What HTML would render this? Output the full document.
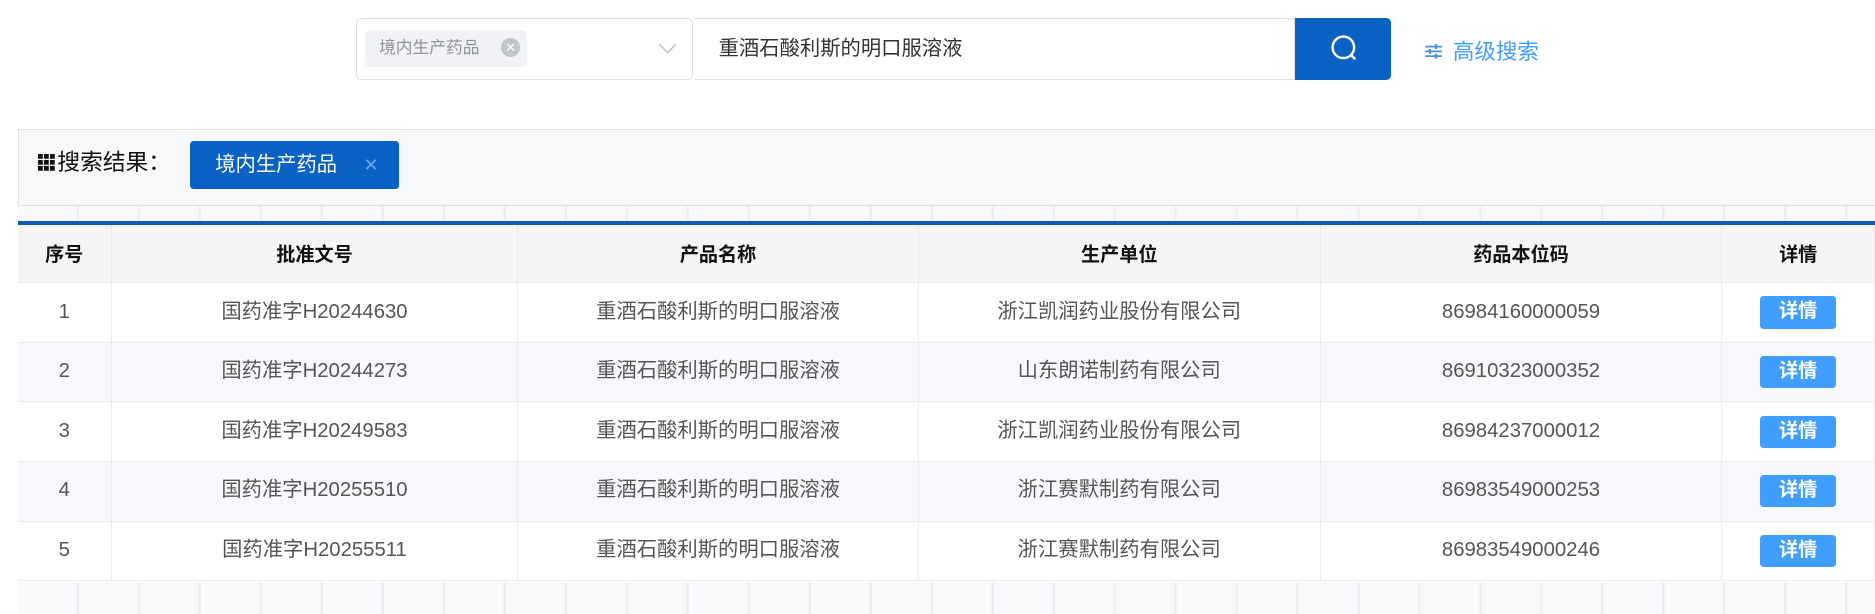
<!DOCTYPE html>
<html><head><meta charset="utf-8"><style>
html,body{margin:0;padding:0;width:1875px;height:614px;overflow:hidden;background:#fff}
#w{position:relative;width:1568px;height:514px;zoom:1.1958;font-family:"Liberation Sans","Noto Sans CJK SC",sans-serif;background:#fff}
.a{position:absolute}
.grid{left:15px;right:0;background-color:#f8f9fb;background-image:repeating-linear-gradient(90deg,transparent 0 49px,#eceef2 49px 51px)}
table{border-collapse:collapse;table-layout:fixed;position:absolute;left:15px;top:188px;width:1553px;font-size:16px}
th{height:48px;padding:0;background:#f5f5f5;color:#111;font-weight:bold;border-right:1px solid #eaeaea;border-bottom:1px solid #ececec}
td{height:49px;padding:0;text-align:center;color:#555;font-size:17px;line-height:20px;border-right:1px solid #ececec;border-bottom:1px solid #ececec;background:#fff}
tr:nth-child(odd) td{background:#f7f9fc}
.b{display:inline-block;width:64px;height:27px;line-height:27px;font-size:16px;background:#409eff;color:#fff;font-weight:bold;border-radius:3px;vertical-align:middle}
</style></head><body><div id="w">
<div class="a" style="left:298px;top:15px;width:280px;height:50px;border:1px solid #dcdfe6;border-radius:4px"></div>
<div class="a" style="left:305px;top:25px;width:136px;height:31px;background:#f0f2f5;border-radius:4px"></div>
<div class="a" style="left:317px;top:30px;font-size:14px;color:#909399;line-height:20px">境内生产药品</div>
<div class="a" style="left:419px;top:32px;width:16px;height:16px;border-radius:50%;background:#c0c4cc;color:#fff;font-size:11px;line-height:16px;text-align:center">✕</div>
<svg class="a" style="left:550px;top:36px" width="16" height="10"><path d="M1 1 L8 8 L15 1" fill="none" stroke="#c0c4cc" stroke-width="1.3"/></svg>
<div class="a" style="left:580px;top:15px;width:502px;height:50px;border:1px solid #dcdfe6;border-left:none"></div>
<div class="a" style="left:601px;top:30px;font-size:17px;color:#333;line-height:22px">重酒石酸利斯的明口服溶液</div>
<div class="a" style="left:1083px;top:15px;width:80px;height:52px;background:#0962c4;border-radius:0 4px 4px 0"></div>
<svg class="a" style="left:1111px;top:28px" width="26" height="26"><circle cx="12" cy="12" r="9" fill="none" stroke="#fff" stroke-width="2"/><path d="M18.5 18.5 L22 22" stroke="#fff" stroke-width="2"/></svg>
<svg class="a" style="left:1191px;top:36px" width="16" height="14"><g stroke="#4a90e2" stroke-width="1.5"><path d="M1 3H15M1 7H15M1 11H15"/></g><g fill="#4a90e2"><rect x="9" y="1" width="2" height="4"/><rect x="4" y="5" width="2" height="4"/><rect x="9" y="9" width="2" height="4"/></g></svg>
<div class="a" style="left:1215px;top:32px;font-size:18px;color:#409eff;line-height:24px">高级搜索</div>
<div class="a" style="left:15px;top:108px;width:1553px;height:63px;background:#f7f8fa;border:1px solid #e0e0e0;border-right:none"></div>
<svg class="a" style="left:32px;top:129px" width="16" height="14"><g fill="#111"><rect x="0" y="0" width="4" height="4"/><rect x="5" y="0" width="4" height="4"/><rect x="10" y="0" width="4" height="4"/><rect x="0" y="5" width="4" height="4"/><rect x="5" y="5" width="4" height="4"/><rect x="10" y="5" width="4" height="4"/><rect x="0" y="10" width="4" height="4"/><rect x="5" y="10" width="4" height="4"/><rect x="10" y="10" width="4" height="4"/></g></svg>
<div class="a" style="left:48px;top:123px;font-size:19px;color:#111;line-height:26px">搜索结果：</div>
<div class="a" style="left:159px;top:118px;width:175px;height:40px;background:#0962c4;border-radius:3px"></div>
<div class="a" style="left:180px;top:126px;font-size:17px;color:#fff;line-height:24px">境内生产药品</div>
<div class="a" style="left:304px;top:126px;font-size:15px;color:#6ea8ee;line-height:24px">✕</div>
<div class="a grid" style="top:172px;height:13px"></div>
<div class="a" style="left:15px;right:0;top:185px;height:3px;background:#0a5cb5"></div>
<div class="a grid" style="top:487px;height:27px"></div>
<table>
<colgroup><col style="width:78px"><col style="width:340px"><col style="width:335px"><col style="width:336px"><col style="width:336px"><col></colgroup>
<tr><th>序号</th><th>批准文号</th><th>产品名称</th><th>生产单位</th><th>药品本位码</th><th>详情</th></tr>
<tr><td>1</td><td>国药准字H20244630</td><td>重酒石酸利斯的明口服溶液</td><td>浙江凯润药业股份有限公司</td><td>86984160000059</td><td><span class="b">详情</span></td></tr>
<tr><td>2</td><td>国药准字H20244273</td><td>重酒石酸利斯的明口服溶液</td><td>山东朗诺制药有限公司</td><td>86910323000352</td><td><span class="b">详情</span></td></tr>
<tr><td>3</td><td>国药准字H20249583</td><td>重酒石酸利斯的明口服溶液</td><td>浙江凯润药业股份有限公司</td><td>86984237000012</td><td><span class="b">详情</span></td></tr>
<tr><td>4</td><td>国药准字H20255510</td><td>重酒石酸利斯的明口服溶液</td><td>浙江赛默制药有限公司</td><td>86983549000253</td><td><span class="b">详情</span></td></tr>
<tr><td>5</td><td>国药准字H20255511</td><td>重酒石酸利斯的明口服溶液</td><td>浙江赛默制药有限公司</td><td>86983549000246</td><td><span class="b">详情</span></td></tr>
</table>
</div></body></html>
